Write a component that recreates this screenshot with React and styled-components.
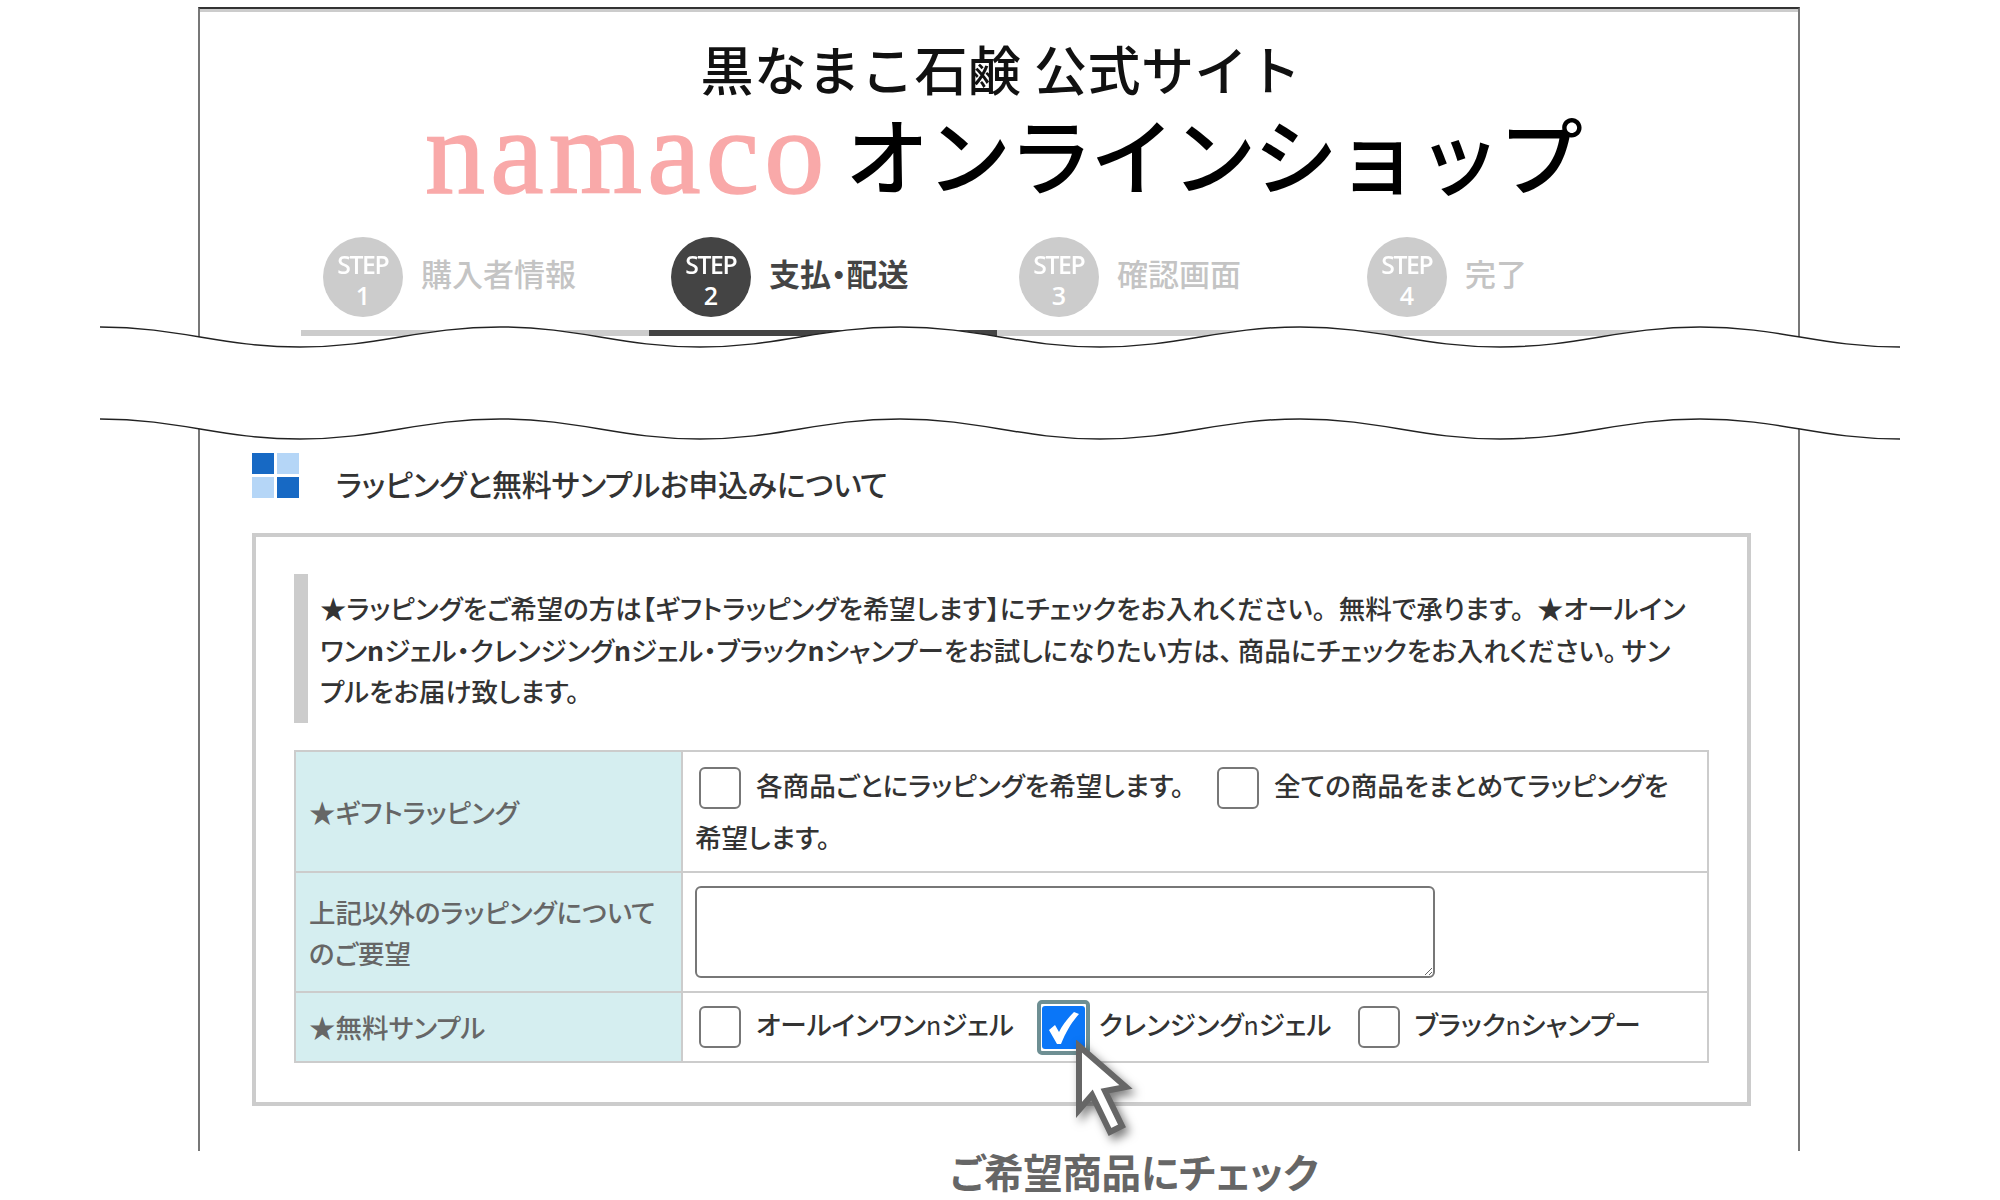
import React from 'react'
import styled, { createGlobalStyle } from 'styled-components'

const GlobalStyle = createGlobalStyle`
    html, body {
        margin:0;
        padding:0;
        background:#fff;
    }
    body {
        font-family:"Noto Sans CJK JP","Noto Sans",sans-serif;
        font-feature-settings:"palt";
    }
`

const Page = styled.div`
    position:relative;
    width:2000px;
    height:1200px;
    padding:7px 0 0 198px;
    box-sizing:border-box;
    overflow:hidden;
`

const Frame = styled.div`
    width:1602px;
    height:1144px;
    box-sizing:border-box;
    border-left:2px solid #777;
    border-right:2px solid #777;
    border-top:2px solid #333;
    box-shadow:inset 0 3px 0 #ccc;
`

const Title = styled.div`
    display:flex;
    justify-content:center;
    padding:26px 0 0 4px;
    font-size:53px;
    font-weight:500;
    line-height:66px;
    letter-spacing:.5px;
    color:#111;
    font-feature-settings:normal;
`

const Logo = styled.div`
    display:flex;
    align-items:center;
    height:96px;
    margin-top:4px;
    padding:0 0 0 225px;
    gap:16px;
`

const LogoName = styled.span`
    font-family:"Liberation Serif",serif;
    font-size:120px;
    line-height:96px;
    letter-spacing:5.2px;
    color:#f9a9a9;
    -webkit-text-stroke:1.5px #f9a9a9;
`

const LogoShop = styled.span`
    font-size:84px;
    font-weight:500;
    line-height:96px;
    color:#000;
    font-feature-settings:normal;
    letter-spacing:-2.3px;
`

const Steps = styled.div`
    display:flex;
    padding:35px 0 0 101px;
`

const Step = styled.div`
    display:flex;
    align-items:center;
    gap:18px;
    width:348px;
    height:100px;
    box-sizing:border-box;
    padding:0 0 12px 22px;
    border-bottom:6px solid ${p => p.$active ? '#444' : '#ccc'};
    color:${p => p.$active ? '#444' : '#c4c4c4'};
    font-size:31px;
    font-weight:${p => p.$active ? 700 : 500};
`

const StepLabel = styled.span`
    padding-bottom:10px;
`

const Circle = styled.div`
    display:flex;
    flex-direction:column;
    align-items:center;
    justify-content:center;
    flex:none;
    width:80px;
    height:80px;
    box-sizing:border-box;
    padding-top:6px;
    border-radius:50%;
    background:${p => p.$active ? '#444' : '#ccc'};
    color:#fff;
    font-family:"Open Sans",sans-serif;
    font-size:25px;
    font-weight:600;
    line-height:31px;
`

const StepWord = styled.span`
    font-size:26px;
    letter-spacing:-1.5px;
    transform:scaleX(.95);
`

const Heading = styled.div`
    display:flex;
    align-items:flex-start;
    gap:37px;
    margin:117px 0 0 52px;
`

const HeadingIcon = styled.div`
    display:grid;
    grid-template-columns:22px 22px;
    grid-template-rows:21px 21px;
    gap:3px;
`

const IconSquare = styled.div`
    background:${p => p.$dark ? '#1769c4' : '#b5d6f7'};
`

const HeadingText = styled.div`
    padding:9px 0 3px;
    font-size:30px;
    line-height:42px;
    font-weight:500;
    color:#333;
    letter-spacing:-.3px;
`

const Panel = styled.div`
    width:1499px;
    height:573px;
    box-sizing:border-box;
    margin:26px 0 0 52px;
    padding:37px 38px 0;
    border:4px solid #ccc;
`

const Note = styled.div`
    padding:13px 0 11px 12px;
    border-left:14px solid #ccc;
    font-size:26.5px;
    line-height:41.5px;
    font-weight:500;
    color:#333;
`

const Punct = styled.span`
    margin-right:${p => p.$gap}px;
`

const Table = styled.table`
    width:1415px;
    margin-top:27px;
    border-collapse:collapse;
    table-layout:fixed;
`

const Label = styled.th`
    width:387px;
    box-sizing:border-box;
    padding:0 10px 0 13px;
    border:2px solid #ccc;
    background:#d5eef0;
    color:#666;
    font-size:26.5px;
    line-height:41px;
    font-weight:500;
    text-align:left;
`

const Cell = styled.td`
    height:${p => p.$height}px;
    box-sizing:border-box;
    padding:0 0 0 12px;
    border:2px solid #ccc;
    color:#333;
    font-size:26.6px;
    line-height:52px;
    font-weight:500;
`

const Option = styled.span`
    margin-right:${p => p.$gap}px;
`

const Box = styled.span`
    display:inline-flex;
    align-items:center;
    justify-content:center;
    width:42px;
    height:42px;
    box-sizing:border-box;
    margin:0 15px 2px 4px;
    border:2px solid #777;
    border-radius:6px;
    background:#fff;
    vertical-align:middle;
`

const CheckedBox = styled.span`
    display:inline-flex;
    align-items:center;
    justify-content:center;
    width:53px;
    height:55px;
    box-sizing:border-box;
    margin:0 9px 0 0;
    border:4px solid #6e8f93;
    border-radius:5px;
    vertical-align:middle;

    span {
        display:flex;
        align-items:center;
        justify-content:center;
        width:43px;
        height:43px;
        border-radius:3px;
        background:#0a76f8;
    }
`

const Small = styled.span`
    font-size:25px;
    font-weight:400;
`

const Request = styled.textarea`
    display:block;
    width:740px;
    height:92px;
    box-sizing:border-box;
    border:2px solid #777;
    border-radius:6px;
    background:#fff;
    outline:none;
`

const Caption = styled.div`
    margin:0 0 0 752px;
    font-size:39.6px;
    line-height:40px;
    font-weight:700;
    color:#666;
    letter-spacing:-.4px;
    white-space:nowrap;
`

const Tear = styled.svg`
    position:absolute;
    left:100px;
    top:325px;
`

const Pointer = styled.svg`
    position:absolute;
    left:1068px;
    top:1040px;
    filter:drop-shadow(4px 5px 5px rgba(0,0,0,.5));
`

const AMP = 20
const HALF = 200

// half sine humps from x=0 to x=1800, forward or back
const wave = (base, back) => {
    let d = ''
    for (let i = 0; i < 9; i++) {
        const n = back ? 8 - i : i
        const from = back ? (n + 1) * HALF : n * HALF
        const to = back ? n * HALF : (n + 1) * HALF
        const yFrom = base + (((back ? n + 1 : n) % 2) ? AMP : 0)
        const yTo = base + (((back ? n : n + 1) % 2) ? AMP : 0)
        const k = back ? -80 : 80
        d += `C${from + k} ${yFrom} ${to - k} ${yTo} ${to} ${yTo}`
    }
    return d
}

const steps = [
    { no: 1, label: '購入者情報' },
    { no: 2, label: '支払・配送', active: true },
    { no: 3, label: '確認画面' },
    { no: 4, label: '完了' },
]

const App = () => {
    return (
        <Page>
            <GlobalStyle />
            <Frame>
                <Title>黒なまこ石鹸 公式サイト</Title>
                <Logo>
                    <LogoName>namaco</LogoName>
                    <LogoShop>オンラインショップ</LogoShop>
                </Logo>
                <Steps>
                    {steps.map(step => (
                        <Step key={step.no} $active={step.active}>
                            <Circle $active={step.active}>
                                <StepWord>STEP</StepWord>
                                {step.no}
                            </Circle>
                            <StepLabel>{step.label}</StepLabel>
                        </Step>
                    ))}
                </Steps>

                <Heading>
                    <HeadingIcon>
                        <IconSquare $dark />
                        <IconSquare />
                        <IconSquare />
                        <IconSquare $dark />
                    </HeadingIcon>
                    <HeadingText>ラッピングと無料サンプルお申込みについて</HeadingText>
                </Heading>

                <Panel>
                    <Note>
                        ★ラッピングをご希望の方は【ギフトラッピングを希望します】にチェックをお入れください<Punct $gap={13}>。</Punct>無料で承ります<Punct $gap={13}>。</Punct>★オールイン<br />
                        ワン<b>n</b>ジェル・クレンジング<b>n</b>ジェル・ブラック<b>n</b>シャンプーをお試しになりたい方は<Punct $gap={5}>、</Punct>商品にチェックをお入れください<Punct $gap={5}>。</Punct>サン<br />
                        プルをお届け致します。
                    </Note>
                    <Table>
                        <tbody>
                            <tr>
                                <Label>★ギフトラッピング</Label>
                                <Cell $height={121}>
                                    <Box />
                                    <Option $gap={29}>各商品ごとにラッピングを希望します。</Option>
                                    <Box />
                                    全ての商品をまとめてラッピングを<br />
                                    希望します。
                                </Cell>
                            </tr>
                            <tr>
                                <Label>上記以外のラッピングについて<br />のご要望</Label>
                                <Cell $height={120}>
                                    <Request readOnly />
                                </Cell>
                            </tr>
                            <tr>
                                <Label>★無料サンプル</Label>
                                <Cell $height={70}>
                                    <Box />
                                    <Option $gap={23}>オールインワン<Small>n</Small>ジェル</Option>
                                    <CheckedBox>
                                        <span>
                                            <svg width="34" height="36" viewBox="0 0 34 36">
                                                <path d="M3 20 L9 15 L13 22 C17 14 22 8 28 2 L33 4 C25 13 20 22 15 34 L11 34 Z" fill="#fff" />
                                            </svg>
                                        </span>
                                    </CheckedBox>
                                    <Option $gap={22}>クレンジング<Small>n</Small>ジェル</Option>
                                    <Box />
                                    ブラック<Small>n</Small>シャンプー
                                </Cell>
                            </tr>
                        </tbody>
                    </Table>
                </Panel>
            </Frame>
            <Caption>ご希望商品にチェック</Caption>

            <Tear width="1800" height="120" viewBox="0 0 1800 120">
                <path d={`M0 2${wave(2, false)}L1800 114${wave(94, true)}Z`} fill="#fff" />
                <path d={`M0 2${wave(2, false)}`} fill="none" stroke="#222" strokeWidth="1.5" />
                <path d={`M0 94${wave(94, false)}`} fill="none" stroke="#222" strokeWidth="1.5" />
            </Tear>

            <Pointer width="70" height="100" viewBox="0 0 70 100">
                <path d="M11 6 L11 70 L24 55 L42 92 L54 86 L37 51 L58 47 Z" fill="#fff" stroke="#666" strokeWidth="6" strokeLinejoin="miter" />
            </Pointer>
        </Page>
    )
}

export default App
